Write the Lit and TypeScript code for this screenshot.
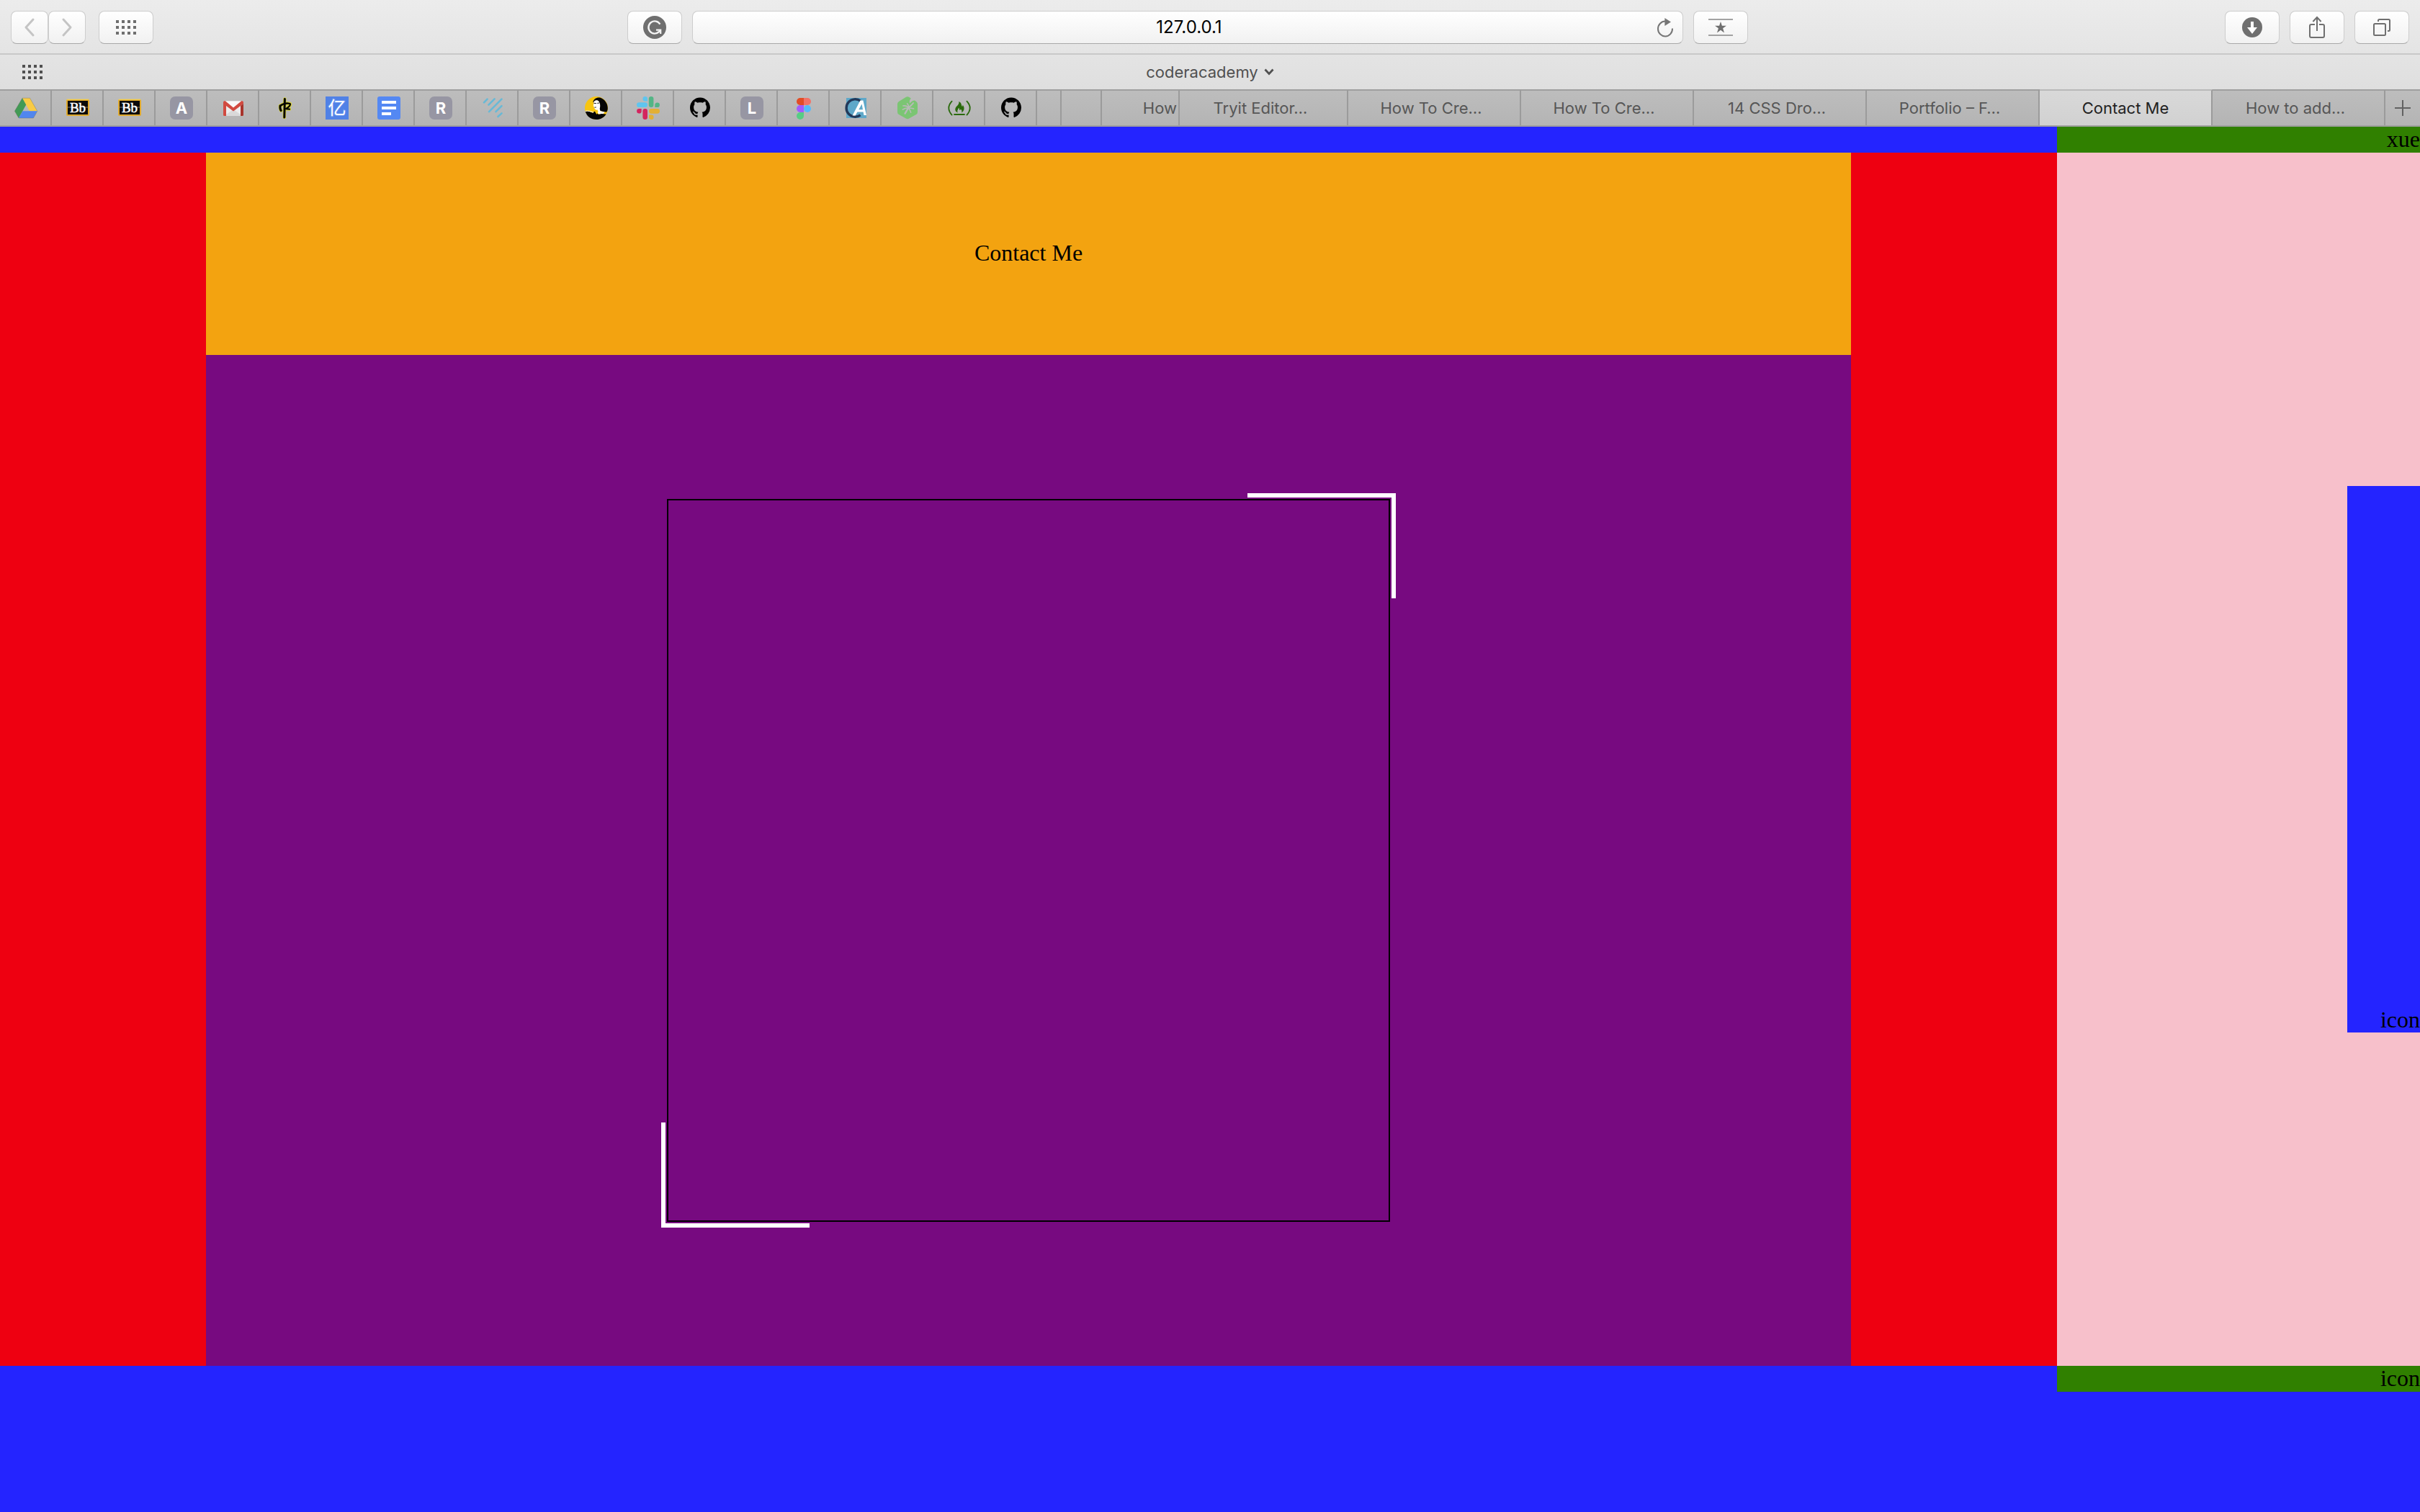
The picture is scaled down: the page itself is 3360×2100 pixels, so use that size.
import { LitElement, html, css, svg } from "lit";
import { customElement } from "lit/decorators.js";
import { classMap } from "lit/directives/class-map.js";

const letter = (ch: string) => svg`
  <rect width="32" height="32" rx="7" fill="#9796a3"/>
  <text x="16" y="24" text-anchor="middle" font-family="Inter, sans-serif" font-size="22" font-weight="700" fill="#fff">${ch}</text>`;

const blackboard = svg`
  <rect x="1" y="5" width="30" height="21" rx="1" fill="#0b0b0b" stroke="#e0a92c" stroke-width="2"/>
  <path d="M0.5 4.2H31.5" stroke="#f8d648" stroke-width="1"/>
  <path d="M2 15H30" stroke="#777" stroke-width="1"/>
  <text x="16" y="22" text-anchor="middle" font-family="Liberation Serif, serif" font-size="19" fill="#fff" stroke="#fff" stroke-width=".5">Bb</text>`;

const github = svg`<g transform="translate(2 1.6) scale(1.75)"><path fill="#000" d="M8 0C3.58 0 0 3.58 0 8c0 3.54 2.29 6.53 5.47 7.59.4.07.55-.17.55-.38 0-.19-.01-.82-.01-1.49-2.01.37-2.53-.49-2.69-.94-.09-.23-.48-.94-.82-1.13-.28-.15-.68-.52-.01-.53.63-.01 1.08.58 1.23.82.72 1.21 1.87.87 2.33.66.07-.52.28-.87.51-1.07-1.78-.2-3.64-.89-3.64-3.95 0-.87.31-1.59.82-2.15-.08-.2-.36-1.02.08-2.12 0 0 .67-.21 2.2.82.64-.18 1.32-.27 2-.27.68 0 1.36.09 2 .27 1.53-1.04 2.2-.82 2.2-.82.44 1.1.16 1.92.08 2.12.51.56.82 1.27.82 2.15 0 3.07-1.87 3.75-3.65 3.95.29.25.54.73.54 1.48 0 1.07-.01 1.93-.01 2.2 0 .21.15.46.55.38A8.013 8.013 0 0016 8c0-4.42-3.58-8-8-8z"/></g>`;

const drive = svg`
  <path fill="#f9cb45" d="M11 2.2H21.5L31.8 20.3H21Z"/>
  <path fill="#429a55" d="M11 2.2L16.2 11.5L6 30L.4 20.3Z"/>
  <path fill="#5186ee" d="M11.4 20.3H31.8L26.4 30H6Z"/>
  <path fill="none" stroke="#66665a" stroke-opacity=".5" stroke-width=".7" d="M11 2.2H21.5L31.8 20.3L26.4 30H6L.4 20.3Z"/>`;

const gmail = svg`
  <path fill="#ececec" d="M3 6.5H29V27H3Z"/>
  <path fill="#d9d9d9" d="M16 18L29 27H3Z"/>
  <path fill="#f8f8f8" d="M3 8L16 19L29 8V6.5H3Z"/>
  <path fill="#d14a40" d="M2 8.5Q2 6 4.5 6L16 15.5L27.5 6Q30 6 30 8.5V10L16 20.5L6 13V27H3.5Q2 27 2 25.5Z"/>
  <path fill="#a8342c" d="M26 13L30 10V25.5Q30 27 28.5 27H26Z"/>`;

const brush = svg`
  <g fill="none" stroke-linecap="round" stroke-linejoin="round">
    <g stroke="#d8d330" stroke-width="4.4"><path d="M15.4 3.5L14.8 29"/><path d="M9 13C8.6 16 9 18 10.2 19.6"/><path d="M9 13C13 10 18 8.8 22.6 10C24 12 20 15.6 17 17L22 17.6"/></g>
    <g stroke="#050505" stroke-width="3"><path d="M15.4 3.5L14.8 29"/><path d="M9 13C8.6 16 9 18 10.2 19.6"/><path stroke-width="2.3" d="M9 13C13 10 18 8.8 22.6 10C24 12 20 15.6 17 17L22 17.6"/></g>
  </g>`;

const yi = svg`
  <rect width="32" height="32" fill="#5081e6"/>
  <g font-family="Noto Sans CJK SC, sans-serif" font-size="25" text-anchor="middle">
    <text x="16" y="25" fill="none" stroke="#a8c3ff" stroke-width="2" opacity=".3">亿</text>
    <text x="16" y="25" fill="#fff">亿</text>
  </g>`;

const docs = svg`<rect width="32" height="32" rx="3" fill="#5488f3"/><path fill="#fff" d="M6 6H26V10H6ZM6 14H26V18H6ZM6 22H19V26H6Z"/>`;

const stripes = svg`<path fill="none" stroke="#68b9d6" stroke-width="2.6" stroke-linecap="round" d="M4 8.3L8.6 3.6M10.4 11.6L18.6 3.4M11 21.2L28.5 3.6M20.4 21.2L28.5 13.2M23.4 28L28.5 23.4"/>`;

const reader = svg`
  <circle cx="16" cy="16" r="16" fill="#f7c511"/>
  <path fill="#050505" d="M11.4 8C12 3.6 16 1 21 1.6C27.5 3.4 31.8 10 31.8 16C31.8 18 31.4 20 30.4 21.6L27 21.4L21 20L19 10Z"/>
  <path fill="#fff" d="M12.6 7C14.6 4.8 18 4.4 19.6 7C21.6 10 21.6 14 20.6 17.2L21.6 20.2L27.6 21.6L24 26L18 23.4L17.8 18.6C15.4 19 13.4 17.6 13.2 15.4L11.8 13Z"/>
  <path stroke="#222" stroke-width="1" fill="none" d="M12.4 9.4L16 9.6M17.2 9.4L20 9M13.4 15.2L15.8 15"/>
  <path fill="#050505" d="M.8 21C4 19.8 8 21.6 11 22.8L13.8 20.4L19 25L23 24L29.6 24.4C26.6 29.2 21.8 32 16 32C8.6 32 2.6 27.6.8 21Z"/>
  <path fill="none" stroke="#fff" stroke-width="1" d="M1 20.4C4 19.4 8 20.8 12 22.2"/>
  <path fill="#f7c511" d="M13.6 20L18.8 20.6L16.4 25Z"/>`;

const slack = svg`
  <g fill="#5fc5ef"><rect y="8.3" width="15" height="6.7" rx="3.35"/><path d="M15 6.6H11.8A3.3 3.3 0 1 1 15 3.3Z"/></g>
  <g fill="#53b585"><rect x="16.8" width="6.6" height="15" rx="3.3"/><path d="M25.3 15V11.8A3.3 3.3 0 1 1 28.6 15Z"/></g>
  <g fill="#e3b035"><rect x="17" y="17" width="15" height="6.7" rx="3.35"/><path d="M17 25.4H20.2A3.3 3.3 0 1 1 17 28.7Z"/></g>
  <g fill="#d4245e"><rect x="8.4" y="17" width="6.6" height="15" rx="3.3"/><path d="M6.7 17V20.2A3.3 3.3 0 1 1 3.4 17Z"/></g>`;

const figma = svg`
  <path fill="#e24c25" d="M16 2V12H11A5 5 0 0 1 11 2Z"/>
  <path fill="#f27267" d="M16 2H21A5 5 0 0 1 21 12H16Z"/>
  <path fill="#a25cfb" d="M16 12V22H11A5 5 0 0 1 11 12Z"/>
  <circle cx="21" cy="17" r="5" fill="#55bafa"/>
  <path fill="#57cd83" d="M16 22V27A5 5 0 1 1 11 22Z"/>`;

const coder = svg`
  <rect x="3" y="2" width="28" height="28" fill="#5fa8c9"/>
  <path fill="none" stroke="#22395a" stroke-width="3.4" d="M22.8 6.4A12.2 12.2 0 1 0 22.6 25.8"/>
  <path fill="#fff" d="M11.6 26.4L22.4 5.4H26.4L31 26H27.4L26.6 21.6H18.4L15.6 26.4ZM20.2 18.2H26L24.6 10.4Z"/>`;

const leaf = svg`
  <path fill="#7bc573" d="M13.6 1Q16 -.6 18.4 1L20.8 2.4Q17.6 6.4 19.4 9.6Q22.4 5.6 26 5.6L28 7Q30 8.2 30 10.6V21.4Q30 23.8 28 25L18.2 30.6Q16 31.8 13.8 30.6L4 25Q2 23.8 2 21.4V10.6Q2 8.2 4 7Z"/>
  <g fill="none" stroke="#b9b9b9" stroke-linecap="round">
    <path stroke-width="2.4" d="M17 16L12.6 23.6"/><path stroke-width="1.6" d="M17.4 16C14 15.8 11.6 16.6 9.4 18.2"/><path stroke-width="1.6" d="M17.4 15C15 13.2 12.4 12.6 9.8 13"/><path stroke-width="1.6" d="M18 14.6C17.4 12 16.6 10.6 15.6 9.8"/><path stroke-width="2" d="M18.4 14.8C20.6 13 22.4 11.2 24 9"/><path stroke-width="1.6" d="M18.4 16.4C21 16 22.6 16.2 24.6 17"/><path stroke-width="1.6" d="M17.8 17C19.4 18.6 20.2 20.4 20.6 22.2"/>
  </g>`;

const camp = svg`
  <g fill="none" stroke="#2a6a0c" stroke-width="1.8" stroke-linecap="round"><path d="M5.6 6.6Q-3 16 5.6 25.6"/><path d="M26.4 6.6Q35 16 26.4 25.6"/></g>
  <path fill="#2a6a0c" d="M15.2 7C19.6 8.4 18.4 12.6 20 14C20.8 13.4 20.8 12.2 20.4 11.4C23.6 14.6 23.4 20 19 22.4C20 20.4 19.2 18.8 17.8 17.4C17.6 18.8 16.8 19.2 16 18.6C16 17.4 15.8 16.6 15 15.8C14.4 18 12.2 20 14 22.4C10 21.4 9.4 17.6 11.4 14.8C13.4 12.2 16.2 10.6 15.2 7Z"/>
  <path stroke="#2a6a0c" stroke-width="1.8" stroke-linecap="round" d="M9 25H23"/>`;

const pinned: [string, unknown][] = [
  ["Drive", drive],
  ["Blackboard", blackboard],
  ["Blackboard", blackboard],
  ["A", letter("A")],
  ["Gmail", gmail],
  ["Dictionary", brush],
  ["Yi", yi],
  ["Docs", docs],
  ["R", letter("R")],
  ["Stripes", stripes],
  ["R", letter("R")],
  ["Reader", reader],
  ["Slack", slack],
  ["GitHub", github],
  ["L", letter("L")],
  ["Figma", figma],
  ["Coder Academy", coder],
  ["Treehouse", leaf],
  ["freeCodeCamp", camp],
  ["GitHub", github],
];

const tabs: { text: string; kind: string }[] = [
  { text: "", kind: "sliver" },
  { text: "", kind: "stub" },
  { text: "How", kind: "half" },
  { text: "Tryit Editor…", kind: "first" },
  { text: "How To Cre…", kind: "full" },
  { text: "How To Cre…", kind: "full" },
  { text: "14 CSS Dro…", kind: "full" },
  { text: "Portfolio – F…", kind: "full" },
  { text: "Contact Me", kind: "active" },
  { text: "How to add…", kind: "full" },
];

const dots = svg`${[0, 8, 16, 24].map((x) =>
  [0, 8, 16].map((y) => svg`<rect x=${x} y=${y} width="4" height="4"/>`),
)}`;

@customElement("browser-chrome")
export class BrowserChrome extends LitElement {
  static styles = css`
    :host {
      display: block;
      font-family: Inter, "Liberation Sans", sans-serif;
      font-size: 22px;
      line-height: 28px;
      background: linear-gradient(#ececec, #d9d9d9);
    }
    * {
      box-sizing: border-box;
    }
    svg {
      display: block;
      flex: none;
      overflow: visible;
    }
    .toolbar {
      display: flex;
      align-items: center;
      justify-content: space-between;
      height: 76px;
      padding: 2px 15px 0;
      border-bottom: 2px solid #c9c9c9;
    }
    .group {
      display: flex;
      align-items: center;
      gap: 14px;
    }
    .history {
      display: flex;
      margin-right: 4px;
    }
    .centre {
      flex: 0 1 1556px;
      margin-right: 4px;
    }
    .key {
      display: flex;
      align-items: center;
      justify-content: center;
      width: 76px;
      height: 46px;
      padding: 0;
      border: 1px solid #cdcdcd;
      border-bottom-color: #a9a9a9;
      border-radius: 8px;
      background: linear-gradient(#fff, #f1f1f1);
      fill: #6f6f6f;
      color: #6f6f6f;
    }
    .step {
      width: 52px;
      color: #c4c4c4;
    }
    .address {
      flex: 1;
      width: auto;
      padding: 0 13px 0 39px;
    }
    .url {
      flex: 1;
      min-width: 0;
      border: 0;
      padding: 0;
      background: none;
      font: inherit;
      font-size: 24px;
      color: #000;
      text-align: center;
    }
    .plain {
      display: flex;
      align-items: center;
      justify-content: center;
      border: 0;
      padding: 0;
      background: none;
      font: inherit;
      color: #505050;
      fill: #505050;
    }
    .reload {
      color: #767676;
      fill: #767676;
    }
    .favourites {
      display: grid;
      grid-template-columns: 1fr auto 1fr;
      align-items: center;
      justify-items: start;
      height: 48px;
      padding: 0 31px;
    }
    .folder {
      gap: 8px;
    }
    .tabs {
      display: flex;
      height: 52px;
      border-bottom: 2px solid #9f9f9f;
    }
    .tab {
      display: flex;
      align-items: center;
      justify-content: center;
      overflow: hidden;
      white-space: nowrap;
      text-decoration: none;
      color: #565656;
      border-top: 2px solid #9f9f9f;
      border-right: 2px solid #9b9b9b;
      background: linear-gradient(#bdbdbd, #b4b4b4);
    }
    .pin {
      flex: 0 0 72px;
      padding-left: 2px;
    }
    .sliver {
      flex: 0 0 34px;
    }
    .stub {
      flex: 0 0 56px;
    }
    .half {
      flex: 0 0 108px;
      justify-content: flex-end;
      padding-right: 2px;
    }
    .first {
      flex: 1 1 234px;
      padding-right: 8px;
    }
    .full {
      flex: 1 1 240px;
      padding-right: 8px;
    }
    .active {
      flex: 1 1 240px;
      color: #222;
      border-top-color: #b9b9b9;
      background: linear-gradient(#d9d9d9, #d1d1d1);
    }
    .add {
      flex: 0 0 48px;
      border-top: 2px solid #9f9f9f;
      background: linear-gradient(#bdbdbd, #b4b4b4);
    }
  `;

  render() {
    return html`
      <div class="toolbar">
        <div class="group">
          <div class="history">
            <button class="key step" aria-label="Back">
              <svg width="14" height="26" viewBox="0 0 14 26" fill="none" stroke="currentColor" stroke-width="3" stroke-linecap="round" stroke-linejoin="round"><path d="M12 2L2 13L12 24" /></svg>
            </button>
            <button class="key step" aria-label="Forward">
              <svg width="14" height="26" viewBox="0 0 14 26" fill="none" stroke="currentColor" stroke-width="3" stroke-linecap="round" stroke-linejoin="round"><path d="M2 2L12 13L2 24" /></svg>
            </button>
          </div>
          <button class="key" aria-label="Top sites">
            <svg width="28" height="20" viewBox="0 0 28 20">${dots}</svg>
          </button>
        </div>
        <div class="group centre">
          <button class="key" aria-label="Grammar">
            <svg width="32" height="32" viewBox="0 0 32 32">
              <circle cx="16" cy="16" r="16" />
              <path fill="none" stroke="#f4f4f4" stroke-width="2.4" d="M23.4 11.6A8.6 8.6 0 1 0 22 22.2L24.2 20" />
              <path fill="none" stroke="#f4f4f4" stroke-width="2.2" d="M18 19.6H24.2V25" />
            </svg>
          </button>
          <div class="key address">
            <input class="url" aria-label="Address" value="127.0.0.1" />
            <button class="plain reload" aria-label="Reload">
              <svg width="22" height="26" viewBox="0 0 22 26">
                <path fill="none" stroke="currentColor" stroke-width="2" d="M21 14.5A10 10.4 0 1 1 11 4.6" />
                <path d="M10.4 0L19 5.4L10.4 11Z" />
              </svg>
            </button>
          </div>
          <button class="key" aria-label="Bookmarks">
            <svg width="34" height="24" viewBox="0 0 34 24">
              <path fill="#a2a2a2" d="M0 0H34V2H0ZM0 22H34V24H0Z" />
              <path d="M17 4L18.9 9.7H25L20.1 13.2L22 19.4L17 15.8L12 19.4L13.9 13.2L9 9.7H15.1Z" />
            </svg>
          </button>
        </div>
        <div class="group">
          <button class="key" aria-label="Downloads">
            <svg width="28" height="28" viewBox="0 0 28 28">
              <circle cx="14" cy="14" r="14" />
              <path fill="#fff" d="M12 6H16V14H21L14 23L7 14H12Z" />
            </svg>
          </button>
          <button class="key" aria-label="Share">
            <svg width="22" height="32" viewBox="0 0 22 32" fill="none" stroke="currentColor" stroke-width="2">
              <path d="M8 12H3Q1 12 1 14V28Q1 30 3 30H19Q21 30 21 28V14Q21 12 19 12H14" />
              <path d="M11 21V2M5.4 8L11 2L16.6 8" />
            </svg>
          </button>
          <button class="key" aria-label="Show all tabs">
            <svg width="24" height="24" viewBox="0 0 24 24" fill="none" stroke="currentColor" stroke-width="2">
              <rect x="1" y="7" width="16" height="16" rx="1.5" />
              <path d="M7 4V2.5Q7 1 8.500 1H21.500Q23 1 23 2.500V15.500Q23 17 21.500 17H20" />
            </svg>
          </button>
        </div>
      </div>
      <div class="favourites">
        <button class="plain" aria-label="Favourites">
          <svg width="28" height="20" viewBox="0 0 28 20">${dots}</svg>
        </button>
        <button class="plain folder">
          coderacademy
          <svg width="14" height="10" viewBox="0 0 14 10" fill="none" stroke="currentColor" stroke-width="2.800"><path d="M1.500 1.500L7 7.500L12.500 1.500" /></svg>
        </button>
      </div>
      <nav class="tabs" aria-label="Tabs">
        ${pinned.map(
          ([name, art]) => html`<a class="tab pin" href="#" aria-label=${name}><svg width="32" height="32" viewBox="0 0 32 32">${art}</svg></a>`,
        )}
        ${tabs.map((t) => html`<a class=${classMap({ tab: true, [t.kind]: true })} href="#">${t.text}</a>`)}
        <button class="plain add" aria-label="New tab">
          <svg width="22" height="22" viewBox="0 0 22 22" fill="none" stroke="#626262" stroke-width="2"><path d="M11 0V22M0 11H22" /></svg>
        </button>
      </nav>
    `;
  }
}

@customElement("contact-page")
export class ContactPage extends LitElement {
  static styles = css`
    :host {
      display: grid;
      grid-template-columns: 85fr 15fr;
      grid-template-rows: 36px 1fr 203px;
      background: #2424ff;
      color: #000;
      font-family: "Liberation Serif", serif;
      font-size: 32px;
      line-height: 36px;
    }
    * {
      box-sizing: border-box;
    }
    .strip {
      grid-column: 2;
      align-self: start;
      height: 36px;
      background: #308000;
      line-height: 34px;
      text-align: right;
    }
    .main {
      grid-column: 1;
      display: grid;
      grid-template-columns: 1fr 8fr 1fr;
      grid-template-rows: 1fr 5fr;
      background: #ee0011;
    }
    .title {
      grid-column: 2;
      display: flex;
      align-items: center;
      justify-content: center;
      margin: 0;
      padding-bottom: 2px;
      font: inherit;
      background: #f3a310;
    }
    .body {
      grid-column: 2;
      display: flex;
      align-items: center;
      justify-content: center;
      background: #770a80;
    }
    .frame {
      position: relative;
      width: 1004px;
      aspect-ratio: 1;
      border: 2px solid #000;
    }
    .frame::before,
    .frame::after {
      content: "";
      position: absolute;
      width: 200px;
      height: 140px;
      border: 0 solid #fff;
    }
    .frame::before {
      top: -10px;
      right: -10px;
      border-width: 6px 6px 0 0;
    }
    .frame::after {
      bottom: -10px;
      left: -10px;
      border-width: 0 0 6px 6px;
    }
    .side {
      display: flex;
      align-items: center;
      justify-content: flex-end;
      background: #f7c0cb;
    }
    .icons {
      display: flex;
      align-items: flex-end;
      justify-content: flex-end;
      width: 20%;
      height: 45%;
      background: #2424ff;
    }
  `;

  render() {
    return html`
      <header class="strip">xue</header>
      <main class="main">
        <h1 class="title">Contact Me</h1>
        <section class="body"><div class="frame"></div></section>
      </main>
      <aside class="side"><div class="icons">icon</div></aside>
      <footer class="strip">icon</footer>
    `;
  }
}

@customElement("app-root")
export class AppRoot extends LitElement {
  static styles = css`
    :host {
      display: flex;
      flex-direction: column;
      min-height: 100vh;
    }
    .page {
      flex: 1;
    }
  `;

  render() {
    return html`<browser-chrome></browser-chrome><contact-page class="page"></contact-page>`;
  }
}
